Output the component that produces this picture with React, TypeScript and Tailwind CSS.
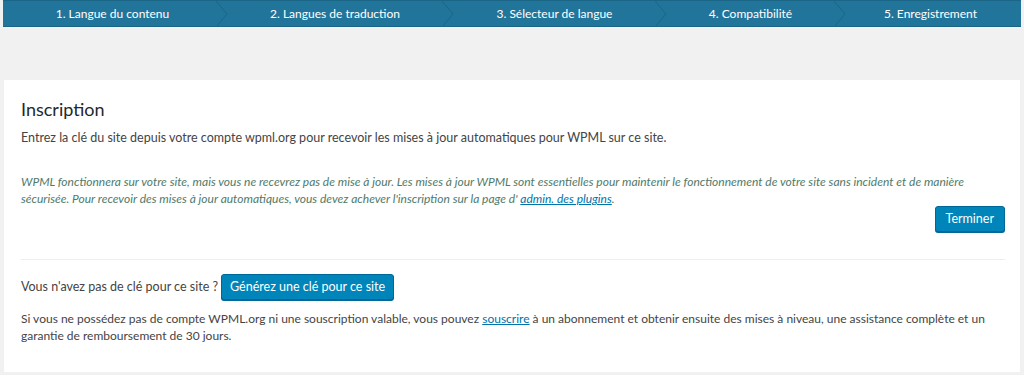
const steps = [
  { label: "1. Langue du contenu", w: "w-[219px]" },
  { label: "2. Langues de traduction", w: "w-[226px]" },
  { label: "3. Sélecteur de langue", w: "w-[213px]" },
  { label: "4. Compatibilité", w: "w-[179px]" },
  { label: "5. Enregistrement", w: "flex-1" },
];

function Chevron() {
  return (
    <svg className="absolute right-[-6px] top-0 h-[26px] w-[12px]" viewBox="0 0 12 26" fill="none">
      <path d="M0 0 L11 13 L0 26" stroke="#1b6587" strokeWidth="1" />
    </svg>
  );
}

export default function App() {
  return (
    <div className="min-h-[375px] bg-[#f1f1f1] text-[12.5px] text-[#444] font-['Lato',sans-serif]">
      <div className="px-[3px]">
        <ul className="flex h-[27px] border-b border-t border-[#1b6587] bg-[#21759b] text-[12px] text-white">
          {steps.map((s, i) => (
            <li key={s.label} className={`relative flex items-center justify-center pt-[1px] ${s.w}`}>
              {s.label}
              {i < steps.length - 1 && <Chevron />}
            </li>
          ))}
        </ul>
      </div>

      <div className="mt-[53px] ml-[4px] mr-[4px] bg-white pl-[17px] pr-[15px] pt-[17px] pb-[28px]">
        <h3 className="text-[18px] leading-[24px] text-[#23282d]">Inscription</h3>
        <p className="mt-[7px] leading-[20px]">
          Entrez la clé du site depuis votre compte wpml.org pour recevoir les mises à jour automatiques pour WPML sur ce site.
        </p>
        <p className="mt-[25px] text-[12px] italic leading-[17px] text-[#4f7a6a]">
          WPML fonctionnera sur votre site, mais vous ne recevrez pas de mise à jour. Les mises à jour WPML sont essentielles pour maintenir le fonctionnement de votre site sans incident et de manière sécurisée. Pour recevoir des mises à jour automatiques, vous devez achever l'inscription sur la page d'{" "}
          <a href="#" className="text-[#0073aa] underline">admin. des plugins</a>.
        </p>
        <div className="mt-[-1px] flex justify-end">
          <button className="h-[26px] rounded-[3px] border border-[#006799] bg-[#0085ba] px-[10px] text-white shadow-[0_1px_0_#006799]">
            Terminer
          </button>
        </div>
        <hr className="mt-[27px] border-t border-[#eee]" />
        <div className="mt-[14px] flex items-center gap-[3px]">
          <span>Vous n'avez pas de clé pour ce site ?</span>
          <button className="h-[26px] rounded-[3px] border border-[#006799] bg-[#0085ba] px-[8px] text-white shadow-[0_1px_0_#006799]">
            Générez une clé pour ce site
          </button>
        </div>
        <p className="mt-[10px] text-[12px] leading-[17px]">
          Si vous ne possédez pas de compte WPML.org ni une souscription valable, vous pouvez{" "}
          <a href="#" className="text-[#0073aa] underline">souscrire</a> à un abonnement et obtenir ensuite des mises à niveau, une assistance complète et un garantie de remboursement de 30 jours.
        </p>
      </div>
    </div>
  );
}
